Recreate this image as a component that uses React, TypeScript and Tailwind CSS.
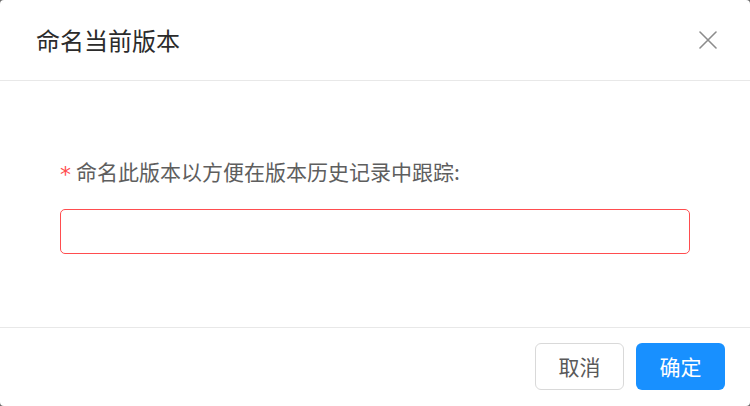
// 命名版本弹窗

const font = { fontFamily: '"Noto Sans CJK SC", "Noto Sans", sans-serif' };

function CloseIcon() {
  return (
    <svg width="18" height="18" viewBox="0 0 18 18" fill="none">
      <path d="M1 1L17 17M17 1L1 17" stroke="#8c8c8c" strokeWidth="1.6" strokeLinecap="round" />
    </svg>
  );
}

export default function App() {
  return (
    <div className="w-[750px] h-[406px] bg-[#6b6b6b]" style={font}>
      <div className="w-full h-full bg-white rounded-[4px] flex flex-col overflow-hidden">
        {/* 标题栏 */}
        <div className="h-[81px] border-b border-[#e8e8e8] pl-[36px] pr-[33px] flex items-center justify-between">
          <h1 className="text-[24px] leading-[32px] text-[#2b2b2b] font-normal">命名当前版本</h1>
          <button className="w-[18px] h-[18px] flex items-center justify-center">
            <CloseIcon />
          </button>
        </div>

        {/* 内容 */}
        <div className="flex-1 px-[60px] pt-[75px]">
          <label className="flex items-center h-[30px] text-[21px] leading-[30px] text-[#5e5e5e]">
            <span
              className="w-[10px] mr-[6px] text-[#ff4d4f] text-[22px] leading-none relative top-[4px]"
              style={{ fontFamily: '"DejaVu Sans", sans-serif' }}
            >
              *
            </span>
            命名此版本以方便在版本历史记录中跟踪:
          </label>
          <input
            className="mt-[23px] block w-full h-[45px] border border-[#ff4d4f] rounded-[5px] px-[16px] text-[21px] outline-none"
            style={font}
          />
        </div>

        {/* 底部按钮 */}
        <div className="h-[79px] border-t border-[#e8e8e8] pt-[15px] pr-[25px] flex justify-end gap-[12px]">
          <button className="w-[89px] h-[47px] border border-[#d9d9d9] rounded-[6px] bg-white text-[21px] text-[#595959]">
            取消
          </button>
          <button className="w-[89px] h-[47px] rounded-[6px] bg-[#1890ff] text-[21px] text-white">
            确定
          </button>
        </div>
      </div>
    </div>
  );
}
